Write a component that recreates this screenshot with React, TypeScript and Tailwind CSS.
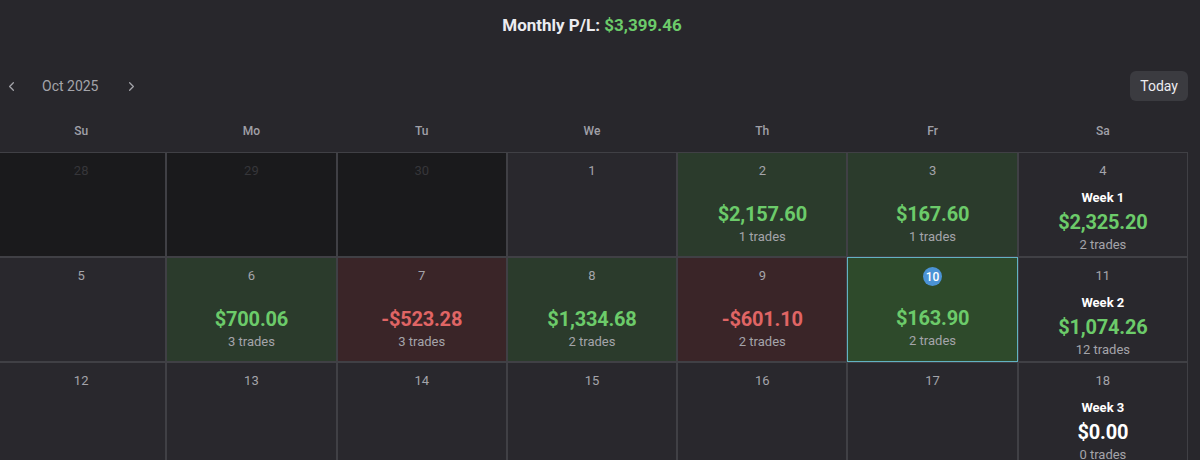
import React from "react";
import { ChevronLeft, ChevronRight } from "lucide-react";

type Cell = {
  day: number;
  out?: boolean;
  pl?: number;
  trades?: number;
  week?: { n: number; pl: number; trades: number };
  today?: boolean;
};

const fmt = (v: number) => {
  const s = Math.abs(v).toLocaleString("en-US", { minimumFractionDigits: 2, maximumFractionDigits: 2 });
  return (v < 0 ? "-$" : "$") + s;
};

const rows: Cell[][] = [
  [
    { day: 28, out: true },
    { day: 29, out: true },
    { day: 30, out: true },
    { day: 1 },
    { day: 2, pl: 2157.6, trades: 1 },
    { day: 3, pl: 167.6, trades: 1 },
    { day: 4, week: { n: 1, pl: 2325.2, trades: 2 } },
  ],
  [
    { day: 5 },
    { day: 6, pl: 700.06, trades: 3 },
    { day: 7, pl: -523.28, trades: 3 },
    { day: 8, pl: 1334.68, trades: 2 },
    { day: 9, pl: -601.1, trades: 2 },
    { day: 10, pl: 163.9, trades: 2, today: true },
    { day: 11, week: { n: 2, pl: 1074.26, trades: 12 } },
  ],
  [
    { day: 12 },
    { day: 13 },
    { day: 14 },
    { day: 15 },
    { day: 16 },
    { day: 17 },
    { day: 18, week: { n: 3, pl: 0, trades: 0 } },
  ],
];

function DayCell({ c }: { c: Cell }) {
  let bg = "bg-[#29282d] border-[#404045]";
  if (c.out) bg = "bg-[#1a1a1c] border-[#404045]";
  else if (c.today) bg = "bg-[#2e4a2b] border-[#62b2c2]";
  else if (c.pl !== undefined && c.pl > 0) bg = "bg-[#2b3b2c] border-[#404045]";
  else if (c.pl !== undefined && c.pl < 0) bg = "bg-[#3a2528] border-[#404045]";

  return (
    <div className={`h-[105px] border flex flex-col items-center ${bg}`}>
      {c.today ? (
        <div className="mt-[9px] w-[19px] h-[19px] rounded-full bg-[#4b93d6] flex items-center justify-center text-[12px] leading-none text-white font-medium">
          {c.day}
        </div>
      ) : (
        <div className={`pt-[9px] text-[13px] leading-[18px] ${c.out ? "text-[#36363a]" : "text-[#a4a4aa]"}`}>
          {c.day}
        </div>
      )}
      {c.pl !== undefined && (
        <>
          <div
            className={`${c.today ? "mt-[18px]" : "mt-[20px]"} text-[20px] leading-[28px] font-bold tracking-[-0.2px] ${
              c.pl < 0 ? "text-[#e06565]" : "text-[#6ccb6a]"
            }`}
          >
            {fmt(c.pl)}
          </div>
          <div className="text-[13px] leading-[18px] text-[#a4a4aa]">{c.trades} trades</div>
        </>
      )}
      {c.week && (
        <>
          <div className="mt-[9px] text-[13px] leading-[18px] font-bold text-white">Week {c.week.n}</div>
          <div
            className={`mt-[2px] text-[20px] leading-[26px] font-bold tracking-[-0.2px] ${
              c.week.pl > 0 ? "text-[#6ccb6a]" : c.week.pl < 0 ? "text-[#e06565]" : "text-white"
            }`}
          >
            {fmt(c.week.pl)}
          </div>
          <div className="mt-[1px] text-[13px] leading-[18px] text-[#a4a4aa]">{c.week.trades} trades</div>
        </>
      )}
    </div>
  );
}

export default function App() {
  const days = ["Su", "Mo", "Tu", "We", "Th", "Fr", "Sa"];
  return (
    <div className="h-[460px] w-[1200px] overflow-hidden bg-[#28272c] font-['Roboto',sans-serif]">
      <div className="ml-[-4px] w-[1192px]">
        <div className="pt-[13px] text-center text-[17px] leading-[24px] font-bold text-[#ececf0]">
          Monthly P/L: <span className="text-[#6ccb6a]">$3,399.46</span>
        </div>
        <div className="mt-[34px] h-[30px] flex items-center justify-between">
          <div className="flex items-center text-[#a4a4aa]">
            <ChevronLeft size={15} strokeWidth={2} className="ml-[8px]" />
            <span className="ml-[23px] text-[14px] leading-[20px]">Oct 2025</span>
            <ChevronRight size={15} strokeWidth={2} className="ml-[25px]" />
          </div>
          <button className="h-[30px] px-[10px] rounded-md bg-[#3b3b40] text-[14px] text-[#ececf0]">Today</button>
        </div>
        <div className="grid grid-cols-7 h-[51px] pt-[20px]">
          {days.map((d) => (
            <div key={d} className="text-center text-[12px] leading-[20px] font-medium text-[#a0a0a8]">
              {d}
            </div>
          ))}
        </div>
        <div className="grid grid-cols-7">
          {rows.flat().map((c, i) => (
            <DayCell key={i} c={c} />
          ))}
        </div>
      </div>
    </div>
  );
}
